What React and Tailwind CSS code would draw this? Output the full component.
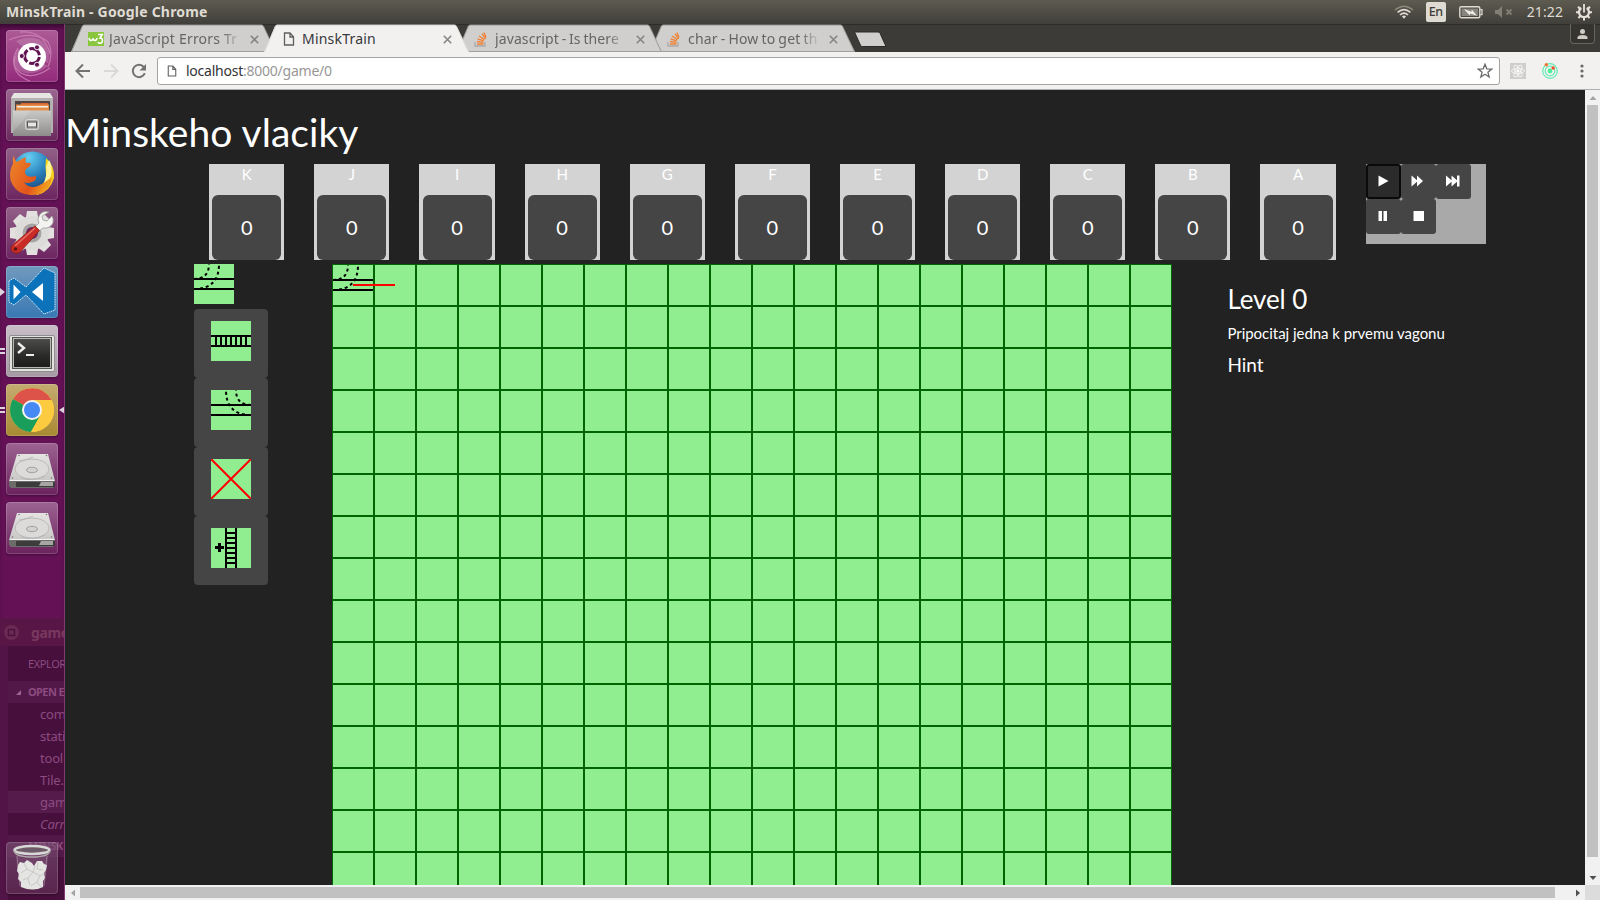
import React from "react";

const UI = "font-['Noto_Sans',sans-serif]";
const LATO = "font-['Lato',sans-serif]";

/* ---------- Top panel ---------- */

function TopPanel() {
  return (
    <header className={`flex h-6 shrink-0 items-center justify-between bg-linear-to-b from-[#5e5b50] to-[#403f3a] pl-[6px] pr-2 ${UI}`}>
      <span className="text-[14px] leading-6 font-bold tracking-[0.2px] whitespace-nowrap text-[#dfdbd2]">MinskTrain - Google Chrome</span>
      <div className="flex items-center">
        <svg width="20" height="16" viewBox="0 0 20 16" fill="none" strokeWidth="1.6" className="mr-3">
          <path d="M1 6Q10-1.5 19 6" stroke="#8a877c" />
          <path d="M3.6 8.4Q10 2.8 16.4 8.4" stroke="#dfdbd2" />
          <path d="M6 11Q10 7.4 14 11" stroke="#dfdbd2" />
          <path d="M8 12.4Q10 10.8 12 12.4L10 14.8z" fill="#dfdbd2" stroke="none" />
        </svg>
        <span className="mr-[13px] flex h-5 w-5 items-center justify-center rounded-[2px] bg-[#dfdbd2] text-[12.5px] leading-none font-medium tracking-[-0.4px] text-[#3c3b37]">En</span>
        <svg width="24" height="14" viewBox="0 0 24 14" className="mr-3">
          <rect x="0.8" y="1.8" width="20" height="11" rx="1.5" fill="none" stroke="#dfdbd2" strokeWidth="1.4" />
          <rect x="2.6" y="3.6" width="16.4" height="7.4" fill="#87857c" />
          <path d="M21.4 4.6h1.6v5h-1.6" fill="none" stroke="#dfdbd2" strokeWidth="1.2" />
          <path d="M5 4l7.5 2.8.3-2.4L18 10.8l-6.800-2.4-.5 2z" fill="#efece5" />
        </svg>
        <svg width="18" height="12" viewBox="0 0 18 12" className="mr-[14px]">
          <path d="M0 4h3l4-4v12l-4-4H0z" fill="#827f75" />
          <path d="M11.500 3.500l5 5m0-5l-5 5" stroke="#827f75" strokeWidth="1.800" />
        </svg>
        <span className="mr-[13px] text-[14px] leading-6 tracking-[0.1px] text-[#dfdbd2]">21:22</span>
        <svg width="16" height="18" viewBox="0 0 16 18" fill="none" stroke="#e6e2d9">
          <path d="M5.300 5A5 5 0 1 0 10.700 5" strokeWidth="2.200" />
          <path d="M8 1v8.500" strokeWidth="1.800" />
          <path d="M0 9.300h3m10 0h3M8 14.500v3M2 3.700l2 2m10-2l-2 2M2.400 15l2-2m9.200 2l-2-2" strokeWidth="2" />
        </svg>
      </div>
    </header>
  );
}

/* ---------- Launcher ---------- */

function UbuntuIcon() {
  return (
    <svg width="52" height="52" viewBox="0 0 52 52">
      <g fill="none" stroke="#ce83b8" strokeWidth="1.300" opacity="0.8">
        <path d="M3 10Q28 0 42 12Q48 22 42 37" />
        <path d="M14 2Q38 0 44 24" />
        <path d="M12 18Q2 34 15 43Q27 50 44 38" />
        <path d="M9 26Q4 44 24 51" />
      </g>
      <path d="M12 19Q4 34 14 41Q26 48 42 36L26 26z" fill="#fff" opacity=".18" />
      <path d="M10 11Q28 3 39 14Q45 22 42 33L26 26z" fill="#fff" opacity=".16" />
      <circle cx="26" cy="27" r="14" fill="#fff" />
      <circle cx="26" cy="26" r="7.400" fill="none" stroke="#5f1350" strokeWidth="3" strokeDasharray="13.400 2.100" strokeDashoffset="-1" />
      <g fill="#5f1350" stroke="#fff" strokeWidth="0.900">
        <circle cx="15.800" cy="26" r="2.500" />
        <circle cx="31" cy="17.300" r="2.500" />
        <circle cx="31" cy="34.700" r="2.500" />
      </g>
    </svg>
  );
}

function FilesIcon() {
  return (
    <svg width="52" height="52" viewBox="0 0 52 52">
      <defs>
        <linearGradient id="cab" x1="0" y1="0" x2="0" y2="1">
          <stop offset="0" stopColor="#c9c9c7" />
          <stop offset="1" stopColor="#8d8c8a" />
        </linearGradient>
      </defs>
      <path d="M8 4h36l3 5v35H5V9z" fill="#b4b2b0" />
      <path d="M8 4h36l3 5H5z" fill="#e6e5e3" />
      <rect x="9" y="12" width="35" height="10" fill="#4d4643" />
      <rect x="15" y="14" width="27" height="3" fill="#d86532" />
      <rect x="10" y="15.500" width="33" height="6.500" fill="#e28d48" />
      <rect x="11" y="17" width="31" height="1.500" fill="#f6f1ea" />
      <path d="M7 21.500h38V47H7z" fill="url(#cab)" />
      <path d="M7 21.500h18L7 43z" fill="#fff" opacity=".15" />
      <rect x="19.500" y="30.500" width="13" height="10" rx="2" fill="#aaa9a7" stroke="#d8d7d5" />
      <rect x="21.500" y="33" width="9" height="5" fill="#e6e6e6" stroke="#555" strokeWidth="1" />
    </svg>
  );
}

function FirefoxIcon() {
  return (
    <svg width="52" height="52" viewBox="0 0 52 52">
      <defs>
        <radialGradient id="globe" cx=".4" cy=".15" r=".9">
          <stop offset="0" stopColor="#66d0f2" />
          <stop offset=".5" stopColor="#2a83bd" />
          <stop offset="1" stopColor="#173a70" />
        </radialGradient>
        <linearGradient id="fox" x1="0" y1="0" x2="1" y2=".5">
          <stop offset="0" stopColor="#ee8a2b" />
          <stop offset=".7" stopColor="#e2541b" />
          <stop offset="1" stopColor="#f29a1f" />
        </linearGradient>
      </defs>
      <circle cx="26.500" cy="24" r="20.500" fill="url(#globe)" />
      <path d="M40 10q9 8 8 20-4 14-17 17-6-7 2-8 8-5 7-13-1-9 0-16z" fill="#f7d21d" />
      <path d="M43 12q4 6 2 16-3 8-9 11 6-12 4-20z" fill="#fff39a" />
      <path d="M8 7q0 5 3 7 4-3 9-5-1 4 0 6 4-1 5 1-1 3-5 5-2 3 0 6 3 3 10 1 1 4-4 6-5 2-8 0 4 7 14 4 8-4 14-9-2 18-21 18Q9 46 4.500 32 3 22 7 16 6 11 8 7z" fill="url(#fox)" />
    </svg>
  );
}

function SettingsIcon() {
  const teeth = [0, 45, 90, 135, 180, 225, 270, 315];
  return (
    <svg width="52" height="52" viewBox="0 0 52 52">
      {teeth.map((a) => (
        <path key={a} d="M21 4h10l1.500 9h-13z" fill="#e2e1df" transform={`rotate(${a} 26 26)`} />
      ))}
      <circle cx="26" cy="26" r="17" fill="#dddcda" />
      <circle cx="26" cy="26" r="9.500" fill="#a6a4a2" />
      <circle cx="26" cy="26" r="6" fill="#6f2660" />
      <path d="M43 5q-7-2-10 4-2 4 0 7l-5 5 4 4 5-4q7 1 10-5 1-4-1-7l-5 5-4-1-1-4z" fill="#f3f3f2" stroke="#9b9a98" strokeWidth=".8" />
      <path d="M29 19l4.500 4.500L15 44q-4 4-8 1t-.500-7z" fill="#c92c25" stroke="#8f1c18" strokeWidth=".8" />
      <path d="M29 21L9 39" stroke="#e8716a" strokeWidth="1.500" />
      <circle cx="9.500" cy="42" r="1.800" fill="#5b1513" />
    </svg>
  );
}

function CodeIcon() {
  return (
    <svg width="52" height="52" viewBox="0 0 52 52">
      <path d="M3 15l5-3 12 9L38 2l11 5v37l-11 4-18-19-12 10-5-3z" fill="#0c73bb" stroke="#d6eafa" strokeWidth="1" strokeDasharray="1.500 .8" />
      <path d="M7.500 18.500v15l7-7.500z" fill="#fff" />
      <path d="M37 17v18l-11-9z" fill="#fff" />
    </svg>
  );
}

function TerminalIcon() {
  return (
    <svg width="52" height="52" viewBox="0 0 52 52">
      <defs>
        <linearGradient id="crt" x1="0" y1="0" x2="0" y2="1">
          <stop offset="0" stopColor="#4c4c4a" />
          <stop offset=".6" stopColor="#2a2a29" />
          <stop offset="1" stopColor="#1d1d1c" />
        </linearGradient>
      </defs>
      <rect x="3.500" y="10.500" width="45" height="36" rx="1.500" fill="#e2e2df" stroke="#8f8d8f" />
      <rect x="6.500" y="12.500" width="39" height="31" fill="#b8b8b4" stroke="#555" />
      <rect x="8" y="14" width="36" height="28" fill="url(#crt)" />
      <path d="M12 18l6 5-6 5" fill="none" stroke="#eee" strokeWidth="2.400" />
      <path d="M20 30h8" stroke="#eee" strokeWidth="2" />
    </svg>
  );
}

function ChromeIcon() {
  return (
    <svg width="52" height="52" viewBox="0 0 52 52">
      <circle cx="26" cy="26" r="22" fill="#fccb3f" />
      <path d="M26 26L7 15A22 22 0 0 1 45.500 16z" fill="#dd5349" />
      <path d="M26 26L7 15A22 22 0 0 0 25 48l9.500-17z" fill="#199f5b" />
      <path d="M26 16h19.500A22 22 0 0 1 25 48l9.500-17z" fill="#fccb3f" />
      <circle cx="26" cy="26" r="10" fill="#f5f4f2" />
      <circle cx="26" cy="26" r="8" fill="#4688f4" />
    </svg>
  );
}

function DriveIcon() {
  return (
    <svg width="52" height="52" viewBox="0 0 52 52">
      <defs>
        <linearGradient id="disk" x1="0" y1="0" x2="0" y2="1">
          <stop offset="0" stopColor="#e4e3e2" />
          <stop offset="1" stopColor="#c9c8c7" />
        </linearGradient>
      </defs>
      <path d="M3 37h46v6l-2 2H5l-2-2z" fill="#6d6c6b" />
      <path d="M10 39h39v5H10z" fill="#3d3c3c" />
      <path d="M35 39h12v4H33z" fill="#a7a6a5" />
      <path d="M11 11h31l7 27H3z" fill="url(#disk)" />
      <path d="M4 37.500h44" stroke="#f3f3f3" />
      <ellipse cx="26" cy="26" rx="17" ry="10" fill="#dcdbda" stroke="#b9b8b7" strokeWidth=".9" />
      <ellipse cx="26" cy="27" rx="5.500" ry="2.700" fill="#d3d2d1" stroke="#9b9a99" strokeWidth=".9" />
      <path d="M13 18q9-1 14-4M15 35q12 4 24-2" fill="none" stroke="#b4b3b2" strokeWidth=".8" />
      <g fill="#777"><circle cx="13" cy="12.500" r=".8" /><circle cx="40.500" cy="12.500" r=".8" /><circle cx="6.500" cy="35" r=".8" /><circle cx="45.500" cy="35" r=".8" /></g>
    </svg>
  );
}

function TrashIcon() {
  return (
    <svg width="52" height="52" viewBox="0 0 52 52">
      <path d="M9 9h34l-5 36q-12 5-24 0z" fill="#8d6285" opacity=".35" />
      <path d="M12 23l2-3 4 1 3-3 5 3 2 3 3-5 5 0 2 3 3 1-1 5-2 3 1 5-2 3 0 6q-10 5-22 0l0-5-3-3 1-5-2-3z" fill="#e4e4e2" />
      <g fill="none" stroke="#bcbbba" strokeWidth=".7">
        <path d="M18 21l3 6-6 4m6-4l6 3 2-6m-2 6l-5 6 2 7m-7-5l5-2m5-6l7 4 5-3m-5 3l-3 6 4 5m-4-5l-6 4M32 20l-1 7 6 1" />
      </g>
      <ellipse cx="26" cy="8" rx="17.500" ry="4" fill="#6e5a69" stroke="#d8d8d6" strokeWidth="2.500" />
      <path d="M8 9q2 6 18 6t18-6" fill="none" stroke="#acaaa9" strokeWidth="1.500" />
      <path d="M11 14l3 30M41 14l-3 30" stroke="#d8cdd5" opacity=".35" />
    </svg>
  );
}

const launcherItems = [
  { icon: <UbuntuIcon />, tone: "from-[#ac5b96] to-[#942a7c]" },
  { icon: <FilesIcon />, tone: "from-[#9a6690] to-[#6c2a5e]" },
  { icon: <FirefoxIcon />, tone: "from-[#906087] to-[#6d2560]" },
  { icon: <SettingsIcon />, tone: "from-[#936089] to-[#6c2460]" },
  { icon: <CodeIcon />, tone: "from-[#7199bd] to-[#3878b4]", left: 1 },
  { icon: <TerminalIcon />, tone: "from-[#c9bec7] to-[#a699a4]", left: 2 },
  { icon: <ChromeIcon />, tone: "from-[#c4ab70] to-[#a98a31]", left: 2, focused: true },
  { icon: <DriveIcon />, tone: "from-[#9c6391] to-[#6b225e]" },
  { icon: <DriveIcon />, tone: "from-[#9c6391] to-[#6b225e]" },
];

function LauncherItem({ icon, tone, left, focused }) {
  return (
    <div className="flex h-[52px] w-full items-center">
      <div className="flex w-1.5 shrink-0 flex-col gap-0.5">
        {left === 1 && (
          <svg width="5" height="8" viewBox="0 0 5 8"><path d="M0 0l5 4-5 4z" fill="#ddd3dc" /></svg>
        )}
        {left === 2 && (
          <>
            <span className="h-[2px] w-[5px] bg-[#ddd3dc]" />
            <span className="h-[2px] w-[5px] bg-[#ddd3dc]" />
          </>
        )}
      </div>
      <div className={`h-[52px] w-[52px] shrink-0 overflow-hidden rounded-[4px] bg-linear-to-b shadow-[inset_0_0_0_1px_rgba(255,255,255,.16),0_1px_2px_rgba(0,0,0,.3)] ${tone}`}>{icon}</div>
      {focused && (
        <svg width="6" height="8" viewBox="0 0 6 8" className="ml-px"><path d="M6 0v8L0 4z" fill="#ddd3dc" /></svg>
      )}
    </div>
  );
}

const ghostFiles = [
  { name: "com" },
  { name: "stati" },
  { name: "tool" },
  { name: "Tile." },
  { name: "gam", active: true },
  { name: "Carr", italic: true },
];

function GhostWindow() {
  return (
    <div className={`absolute inset-x-0 bottom-0 flex h-[282px] flex-col overflow-hidden bg-[#521347] text-[#8c4b80] ${UI}`}>
      <div className="flex h-7 shrink-0 items-center gap-3 bg-[#571645] pl-1">
        <svg width="15" height="15" viewBox="0 0 15 15" className="shrink-0">
          <circle cx="7.500" cy="7.500" r="7.500" fill="#6a2a55" />
          <rect x="4.500" y="4.500" width="6" height="6" fill="none" stroke="#4c123e" strokeWidth="1.500" />
        </svg>
        <span className="text-[14px] font-bold tracking-[-0.4px] text-[#79385f]">game</span>
      </div>
      <div className="ml-2 flex flex-1 flex-col bg-[#460f3c] whitespace-nowrap">
        <div className="flex h-[35px] items-center pt-px pl-5 text-[11px] tracking-[-0.4px]">EXPLOR</div>
        <div className="flex h-[22px] items-center bg-[#521848] pl-2 text-[11px] font-bold tracking-[-0.6px]">
          <svg width="5" height="5" viewBox="0 0 5 5" className="mr-[7px] shrink-0"><path d="M5 0v5H0z" fill="#9a6390" /></svg>
          OPEN E
        </div>
        {ghostFiles.map((f) => (
          <div key={f.name} className={`flex h-[22px] items-center pt-px pl-8 text-[13px] tracking-[-0.2px] ${f.active ? "bg-[#551c4b]" : ""} ${f.italic ? "italic" : ""}`}>{f.name}</div>
        ))}
        <div className="flex h-[22px] items-center bg-[#521848] pl-5 text-[11px] font-bold tracking-[-0.4px]">MINSK</div>
      </div>
    </div>
  );
}

function Launcher() {
  return (
    <aside className="relative flex w-[65px] shrink-0 flex-col justify-between overflow-hidden border-r border-[#7e3a72] bg-[#641156] pt-1.5 pb-1.5 shadow-[inset_0_5px_5px_-2px_#350a2e]">
      <GhostWindow />
      <div className="relative flex flex-col gap-[7px]">
        {launcherItems.map((item, i) => <LauncherItem key={i} {...item} />)}
      </div>
      <div className="relative">
        <LauncherItem icon={<TrashIcon />} tone="from-[#80567a]/60 to-[#5e2b54]/80" />
      </div>
    </aside>
  );
}

/* ---------- Browser chrome ---------- */

function PageIcon({ w = 12, h = 14 }) {
  return (
    <svg width={w} height={h} viewBox="0 0 12 14" fill="none" stroke="#5f5f5f" strokeWidth="1.300">
      <path d="M1.500 1h5.500l3.500 3.800V13h-9zM7 1v4h3.500" />
    </svg>
  );
}

function SchoolsIcon() {
  return (
    <svg width="16" height="14" viewBox="0 0 16 14">
      <rect width="16" height="14" fill="#8ac53e" />
      <path d="M1 6q.5 2.500 2 2.500T5 6.500q.5 2 2 2T9 6" fill="none" stroke="#fff" strokeWidth="1.500" />
      <path d="M10 2.500h4.300L12 6q2.500 0 2.500 2.500t-2.500 2.700q-1.500 0-2.300-1" fill="none" stroke="#fff" strokeWidth="1.500" />
    </svg>
  );
}

function StackIcon() {
  return (
    <svg width="14" height="15" viewBox="0 0 14 15" fill="none">
      <path d="M1 10v4h10v-4" stroke="#aaa9a7" strokeWidth="1.300" />
      <path d="M3 12h6.500M3 9.500l6.500.8M3.500 6.800l6.300 2M5 4l5.500 3.600M8 1.600l3.600 5.200M10 0.500l2 5" stroke="#ef8236" strokeWidth="1.300" />
    </svg>
  );
}

const tabs = [
  { title: "JavaScript Errors Tr", icon: <SchoolsIcon />, z: "z-10", track: "tracking-[0.2px]" },
  { title: "MinskTrain", icon: <PageIcon />, z: "z-30", active: true, track: "tracking-[0.2px]" },
  { title: "javascript - Is there", icon: <StackIcon />, z: "z-20", track: "tracking-[0.1px] [word-spacing:-1px]" },
  { title: "char - How to get th", icon: <StackIcon />, z: "z-10", track: "tracking-[0.2px] [word-spacing:-0.9px]" },
];

function Tab({ title, icon, z, active, track }) {
  return (
    <div className={`relative -mr-3 flex h-7 w-[205px] shrink-0 items-center pt-0.5 ${z}`}>
      <svg width="205" height="28" viewBox="0 0 205 28" className="absolute inset-0">
        <path d="M0 28L11 2.500Q11.700 1 13 1H190.500Q192 1 192.600 2.500L205 28z" fill={active ? "#f2f1f0" : "#d0cfcd"} />
        <path d="M0.500 28L11 3Q11.700 1 13 1H190.500Q192 1 192.600 2.500L204.500 28" fill="none" stroke={active ? "#d9d8d6" : "#9b9a98"} strokeWidth="1" />
        {!active && <path d="M1 27.500h203" stroke="#a09f9d" />}
      </svg>
      <div className="relative flex w-full items-center pl-4">
        <span className={`flex w-[22px] items-center ${active ? "pl-[3px]" : "pl-px"}`}>{icon}</span>
        <span className={`w-[134px] overflow-hidden text-[14px] leading-5 whitespace-nowrap ${track} ${active ? "text-[#38383a]" : "mask-r-from-84% mask-r-to-99% text-[#666564]"}`}>{title}</span>
        <svg width="9" height="9" viewBox="0 0 9 9" className="ml-[7px]"><path d="M.8.8l7.400 7.400m0-7.400L.8 8.200" stroke="#868584" strokeWidth="1.600" /></svg>
      </div>
    </div>
  );
}

function TabStrip() {
  return (
    <div className={`flex h-7 shrink-0 bg-[#3c3b37] pl-[6px] shadow-[inset_0_1px_0_#2f2b29] ${UI}`}>
      {tabs.map((t) => <Tab key={t.title} {...t} />)}
      <svg width="34" height="18" viewBox="0 0 34 18" className="mt-[7px] ml-[10px]">
        <path d="M1.500 1H25q1.500 0 2 1.200l6 13.300H9.500q-1.500 0-2-1.200z" fill="#d0cfcd" stroke="#2c2a28" />
      </svg>
      <div className="mr-[5px] ml-auto flex h-5 w-[25px] items-center justify-center rounded-b-[4px] border border-t-0 border-[#67655f] bg-[#35342f]">
        <svg width="11" height="10" viewBox="0 0 11 10"><circle cx="5.500" cy="2.500" r="2.500" fill="#cfcbc3" /><path d="M.5 10V8q1-2 5-2t5 2v2z" fill="#cfcbc3" /></svg>
      </div>
    </div>
  );
}

function Toolbar() {
  return (
    <div className={`flex h-[38px] shrink-0 items-center border-b border-[#adb0aa] bg-[#f2f1f0] pl-[10px] ${UI}`}>
      <svg width="16" height="16" viewBox="0 0 16 16" fill="none" stroke="#737271" strokeWidth="2"><path d="M15 8H2M8 1.500L1.500 8 8 14.500" /></svg>
      <svg width="16" height="16" viewBox="0 0 16 16" fill="none" stroke="#dad9d7" strokeWidth="2" className="ml-3"><path d="M1 8h13M8 1.500L14.500 8 8 14.500" /></svg>
      <svg width="16" height="16" viewBox="0 0 16 16" className="ml-3" fill="none">
        <path d="M13.800 10.200A6.200 6.200 0 1 1 12.800 4" stroke="#737271" strokeWidth="2" />
        <path d="M15 1v6.500H8.500z" fill="#737271" />
      </svg>
      <div className="ml-[10px] flex h-7 w-[1343px] items-center rounded-[3px] border border-[#a5a4a2] bg-white pl-[9px]">
        <PageIcon w={10} h={12} />
        <span className="ml-[9px] text-[14px] leading-6 tracking-[-0.24px] text-[#333]">localhost<span className="text-[#979797]">:8000/game/0</span></span>
        <svg width="16" height="16" viewBox="0 0 16 16" className="mr-[6px] ml-auto" fill="none" stroke="#6b6a69" strokeWidth="1.300">
          <path d="M8 1.200l1.800 4.600 4.900.3-3.800 3.100 1.300 4.800L8 11.300l-4.200 2.700 1.300-4.800L1.300 6.100l4.900-.3z" />
        </svg>
      </div>
      <svg width="16" height="16" viewBox="0 0 16 16" className="ml-[10px]">
        <rect width="16" height="16" fill="#cfcecd" />
        <g fill="none" stroke="#f4f3f2"><ellipse cx="8" cy="8" rx="6.500" ry="2.500" /><ellipse cx="8" cy="8" rx="6.500" ry="2.500" transform="rotate(60 8 8)" /><ellipse cx="8" cy="8" rx="6.500" ry="2.500" transform="rotate(120 8 8)" /></g>
        <circle cx="8" cy="8" r="1.500" fill="#fff" />
      </svg>
      <svg width="16" height="16" viewBox="0 0 16 16" className="ml-4">
        <g fill="none" stroke="#66eab4" strokeWidth="1.200"><circle cx="8" cy="8" r="7.300" /><circle cx="8" cy="8" r="4.800" /></g>
        <circle cx="8" cy="8" r="2.400" fill="#4df09a" />
        <circle cx="4.300" cy="1.800" r="1.700" fill="#f4702e" /><circle cx="11.200" cy="5" r="1.700" fill="#f4502e" />
      </svg>
      <svg width="4" height="14" viewBox="0 0 4 14" className="ml-[22px]" fill="#6b6a69"><circle cx="2" cy="2" r="1.600" /><circle cx="2" cy="7" r="1.600" /><circle cx="2" cy="12" r="1.600" /></svg>
    </div>
  );
}

/* ---------- Game ---------- */

const carriages = ["K", "J", "I", "H", "G", "F", "E", "D", "C", "B", "A"];

function Carriage({ name }) {
  return (
    <div className="flex h-24 w-[75.125px] shrink-0 flex-col items-center bg-[#d3d3d3]">
      <span className="h-[31px] text-[15px] leading-[21px] text-white">{name}</span>
      <div className="flex h-[65px] w-[69px] items-center justify-center rounded-[6px] bg-[#464545] pb-px text-[20px] leading-none text-white">0</div>
    </div>
  );
}

const controls = [
  <path key="play" d="M2.500 1.500L12.500 7l-10 5.500z" />,
  <path key="ff" d="M0.500 1.500l5.500 4.700V1.500L12 7l-6 5.500V7.800L.5 12.500z" />,
  <path key="end" d="M0 1.500l5.500 4.700V1.500l5.500 4.700V1.500h2.500v11H11V7.800l-5.500 4.700V7.800L0 12.500z" />,
  <path key="pause" d="M2.500 2h3.500v10H2.500zM7.500 2H11v10H7.500z" />,
  <path key="stop" d="M2.500 2h10.500v10H2.500z" />,
];

function Controls() {
  return (
    <div className="flex h-20 w-[120px] shrink-0 flex-wrap content-start bg-[#a9a9a9]">
      {controls.map((shape, i) => (
        <button
          key={i}
          className={`flex h-[35px] w-[35px] items-center justify-center rounded-[3px] pb-px ${i === 0 ? "border-2 border-[#0a0a0a] bg-[#2c2b2b]" : "bg-[#464545]"} ${i === 2 ? "mr-3" : ""}`}
        >
          <svg width="15" height="14" viewBox="0 0 15 14" fill="#fff">{shape}</svg>
        </button>
      ))}
    </div>
  );
}

function SwitchTrack({ flip }) {
  return (
    <svg width="40" height="40" viewBox="0 0 40 40" className="block shrink-0 bg-[#90ee90]" fill="none" stroke="#000" strokeWidth="2">
      <path d="M0 15h40M0 25h40" />
      <g strokeDasharray="3 3" transform={flip ? "translate(40 0) scale(-1 1)" : undefined}>
        <path d="M15 0Q15 15 0 15" strokeDashoffset="-3.5" />
        <path d="M25 0Q25 25 0 25" strokeDashoffset="-1.5" />
      </g>
    </svg>
  );
}

function StraightTrack() {
  return (
    <svg width="40" height="40" viewBox="0 0 40 40" className="block bg-[#90ee90]" stroke="#000" strokeWidth="2">
      <path d="M0 15h40M0 25h40M5 15v10M10 15v10M15 15v10M20 15v10M25 15v10M30 15v10M35 15v10" />
    </svg>
  );
}

function RemoveTile() {
  return (
    <svg width="40" height="40" viewBox="0 0 40 40" className="block bg-[#90ee90]" stroke="#f00" strokeWidth="2">
      <path d="M0 0l40 40M40 0L0 40" />
    </svg>
  );
}

function PlusTrack() {
  return (
    <svg width="40" height="40" viewBox="0 0 40 40" className="block bg-[#90ee90]" stroke="#000" strokeWidth="2">
      <path d="M15 0v40M25 0v40M15 5h10M15 10h10M15 15h10M15 20h10M15 25h10M15 30h10M15 35h10" />
      <path d="M4 19.500h9M8.500 15v9" strokeWidth="3" />
    </svg>
  );
}

const tools = [<StraightTrack key="s" />, <SwitchTrack key="w" flip />, <RemoveTile key="r" />, <PlusTrack key="p" />];

function Toolbox() {
  return (
    <div className="flex w-[74px] shrink-0 flex-col">
      <SwitchTrack />
      <div className="mt-[5px] flex flex-col">
        {tools.map((tool, i) => (
          <button key={i} className="h-[69px] w-[74px] rounded-[4px] bg-[#464545] pr-[17px] pb-[17px] pl-[17px] pt-3">{tool}</button>
        ))}
      </div>
    </div>
  );
}

function Board() {
  return (
    <div className="relative ml-16 grid shrink-0 grid-cols-[repeat(20,42px)] auto-rows-[42px] content-start">
      {Array.from({ length: 300 }, (_, i) => (
        <div key={i} className="h-[42px] w-[42px] border border-[#006400] bg-[#90ee90]">
          {i === 0 && <SwitchTrack />}
        </div>
      ))}
      <span className="absolute top-[20px] left-[21px] h-[2px] w-[42px] bg-[#f00]" />
    </div>
  );
}

function Game() {
  return (
    <main className={`h-[795px] w-[1520px] overflow-hidden bg-[#222] text-white ${LATO}`}>
      <h1 className="pt-[21px] text-[39px] leading-[43px] tracking-[0.04px] whitespace-nowrap">Minskeho vlaciky</h1>
      <div className="mt-[10px] flex gap-[30px] pl-[144.24px]">
        {carriages.map((c) => <Carriage key={c} name={c} />)}
        <Controls />
      </div>
      <div className="mt-1 flex pl-[129px]">
        <Toolbox />
        <Board />
        <section className="ml-[55.4px] shrink-0 whitespace-nowrap">
          <h3 className="mt-[21px] text-[26px] leading-[29px] tracking-[-0.1px]">Level 0</h3>
          <p className="mt-[9px] text-[15px] leading-[21px] tracking-[-0.03px]">Pripocitaj jedna k prvemu vagonu</p>
          <h4 className="mt-[10px] text-[19px] leading-[21px]">Hint</h4>
        </section>
      </div>
    </main>
  );
}

/* ---------- Scrollbars ---------- */

function Arrow({ d, color }) {
  return <svg width="8" height="8" viewBox="0 0 8 8"><path d={d} fill={color} /></svg>;
}

function VerticalScrollbar() {
  return (
    <div className="flex w-[15px] shrink-0 flex-col items-center bg-[#f1f1f1]">
      <div className="flex h-[15px] items-center"><Arrow d="M0.500 6L4 2l3.500 4z" color="#a3a3a3" /></div>
      <div className="h-[752px] w-[11px] bg-[#c1c1c1]" />
      <div className="mt-auto flex h-[15px] items-center"><Arrow d="M0.500 2L4 6l3.500-4z" color="#505050" /></div>
    </div>
  );
}

function HorizontalScrollbar() {
  return (
    <div className="flex h-[15px] shrink-0 items-center bg-[#f1f1f1]">
      <div className="flex w-[15px] justify-center"><Arrow d="M6 0.500L2 4l4 3.500z" color="#a3a3a3" /></div>
      <div className="h-[11px] w-[1475px] bg-[#c1c1c1]" />
      <div className="ml-auto flex w-[15px] justify-center"><Arrow d="M2 0.500L6 4 2 7.500z" color="#505050" /></div>
      <div className="h-[15px] w-[15px] bg-[#dcdcdc]" />
    </div>
  );
}

export default function App() {
  return (
    <div className="flex h-[900px] w-[1600px] flex-col overflow-hidden bg-[#222]">
      <TopPanel />
      <div className="flex min-h-0 flex-1">
        <Launcher />
        <div className="flex min-w-0 flex-1 flex-col">
          <TabStrip />
          <Toolbar />
          <div className="flex h-[795px] shrink-0">
            <Game />
            <VerticalScrollbar />
          </div>
          <HorizontalScrollbar />
        </div>
      </div>
    </div>
  );
}
